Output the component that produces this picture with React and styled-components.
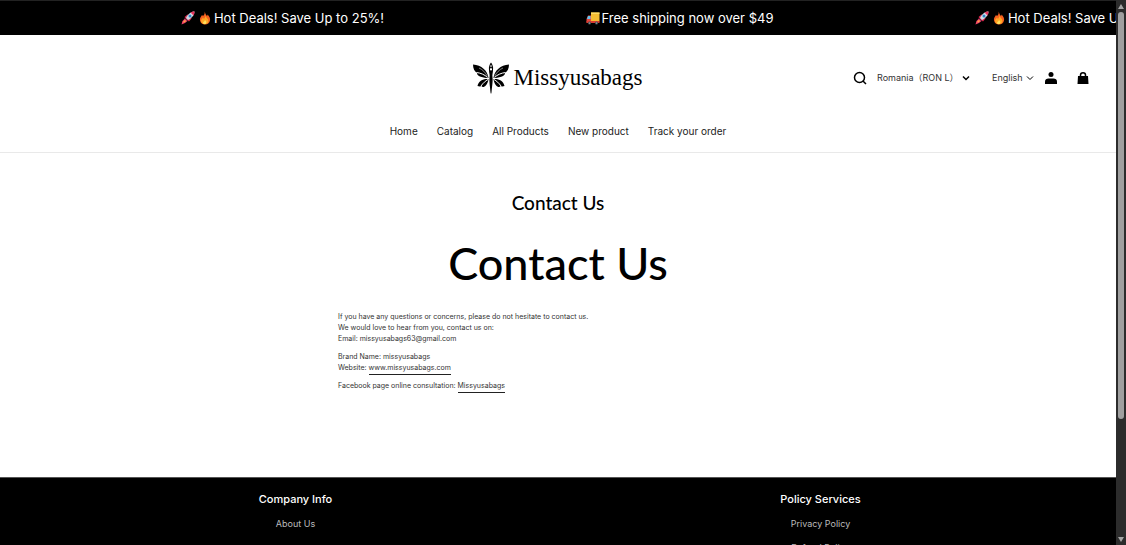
import React, { Fragment, useState } from "react";
import styled, { createGlobalStyle } from "styled-components";

const deals = [
  { id: 1, type: "hot", text: "Hot Deals! Save Up to 25%!" },
  { id: 2, type: "shipping", text: "Free shipping now over $49" },
  { id: 3, type: "hot", text: "Hot Deals! Save Up to 25%!" }
];

const navLinks = ["Home", "Catalog", "All Products", "New product", "Track your order"];

const footerMenus = [
  { title: "Company Info", links: ["About Us"] },
  { title: "Policy Services", links: ["Privacy Policy", "Refund Policy"] }
];

const Rocket = () => (
  <svg width="14" height="14" viewBox="0 0 28 28" aria-hidden="true">
    <path d="M7 12l6-5 4 2-6 8zM16 21l5-6-2-4-8 6z" fill="#d8274b" />
    <path d="M3 20l5-5 5 5-5 4-7 3z" fill="#f4416b" />
    <path d="M4 22l4-4 2 2-4 3z" fill="#ffb13b" />
    <path d="M27 1c-7 0-13 5-17 13l4 4c8-4 13-10 13-17z" fill="#cfdbe4" />
    <path d="M27 1c-3 0-6 1-8 2l6 6c1-2 2-5 2-8z" fill="#e8315b" />
    <circle cx="18" cy="10" r="3" fill="#2c86c9" />
    <path d="M8 15l5 5" stroke="#7b3153" strokeWidth="2" />
  </svg>
);

const Fire = () => (
  <svg width="14" height="14" viewBox="0 0 28 28" aria-hidden="true">
    <path d="M13 1c2 4 2 6 5 9 1-1 1-2 1-3 4 4 6 8 5 12-1 5-5 8-10 8S5 24 4 19c-1-5 2-8 4-11l2 2c3-3 4-5 3-9z" fill="#f4601f" />
    <path d="M14 8c1 5 7 7 7 12 0 4-3 6-7 6s-8-2-8-6 3-5 4-7c1 1 1 2 2 3 1-2 3-4 2-8z" fill="#ffa625" />
    <path d="M14 18c2 2 4 4 2 7-1 2-5 2-6-1 0-2 3-3 4-6z" fill="#ffe05c" />
  </svg>
);

const Truck = () => (
  <svg width="14" height="14" viewBox="0 0 28 28" aria-hidden="true">
    <path d="M10 3h17v18H10z" fill="#f6bd32" />
    <path d="M10 3h17v3H10z" fill="#ffda65" />
    <path d="M4 9h6v14H1v-7z" fill="#e9473e" />
    <path d="M4 10h5v6H2z" fill="#65c4ee" />
    <path d="M1 20h26v4H1z" fill="#d93b31" />
    <circle cx="7" cy="24" r="3" fill="#49555c" />
    <circle cx="21" cy="24" r="3" fill="#49555c" />
    <circle cx="7" cy="24" r="1" fill="#c3ccd0" />
    <circle cx="21" cy="24" r="1" fill="#c3ccd0" />
  </svg>
);

const Wings = () => (
  <svg width="36" height="32" viewBox="0 0 72 64" aria-hidden="true">
    <path d="M31 32C29 17 17 6 0 5c0 8 3 14 8 17-1 5 9 10 23 10z" />
    <path d="M41 32C43 17 55 6 72 5c0 8-3 14-8 17 1 5-9 10-23 10z" />
    <path d="M31 34c-11-1-20 4-22 14 3 1 6 1 8 0 2 5 12 1 14-14zM41 34c11-1 20 4 22 14-3 1-6 1-8 0-2 5-12 1-14-14z" />
    <path d="M7 21c8 1 16 4 22 10M65 21c-8 1-16 4-22 10M30 35c-5 3-10 7-14 13M42 35c5 3 10 7 14 13" fill="none" stroke="#fff" strokeWidth="2" />
    <path d="M12 12c7 3 13 9 17 17M60 12c-7 3-13 9-17 17" fill="none" stroke="#fff" />
    <path d="M36 1c-3 4-5 9-4 15 0 6 2 9 1 15-1 7 1 19 2 30l1 3 1-3c1-11 3-23 2-30-1-6 1-9 1-15 1-6-1-11-4-15z" />
    <path d="M36 5c-2 3-2 7-2 10l1 2h2l1-2c0-3 0-7-2-10z" fill="#fff" />
    <circle cx="36" cy="11" r="2" />
  </svg>
);

const SearchIcon = () => (
  <svg width="14" height="14" viewBox="0 0 28 28" fill="none" stroke="#000" strokeWidth="3" aria-hidden="true">
    <circle cx="13" cy="13" r="10" />
    <path d="M20 20l6 6" />
  </svg>
);

const PersonIcon = () => (
  <svg width="14" height="14" viewBox="0 0 28 28" aria-hidden="true">
    <circle cx="14" cy="7" r="5" />
    <path d="M2 26v-5c0-4 3-6 7-6h10c4 0 7 2 7 6v5z" />
  </svg>
);

const BagIcon = () => (
  <svg width="14" height="14" viewBox="0 0 28 28" aria-hidden="true">
    <path d="M4 10h20l1 16H3z" />
    <path d="M9 12V8c0-6 10-6 10 0v4" fill="none" stroke="#000" strokeWidth="3" />
  </svg>
);

const Chevron = ({ weight }) => (
  <svg width="8" height="8" viewBox="0 0 16 16" fill="none" stroke="#000" strokeWidth={weight} aria-hidden="true">
    <path d="M2 5l6 6 6-6" />
  </svg>
);

const App = () => {
  const [country, setCountry] = useState("ro");
  const [language, setLanguage] = useState("en");

  return (
    <Fragment>
      <GlobalStyle />
      <Shell>
        <Page>
          <Announcement>
            {deals.map(deal => (
              <Deal key={deal.id}>
                {deal.type === "hot" ? (
                  <HotIcons>
                    <Rocket />
                    <Fire />
                  </HotIcons>
                ) : (
                  <Truck />
                )}
                <span>{deal.text}</span>
              </Deal>
            ))}
          </Announcement>
          <Header>
            <HeaderTop>
              <Brand href="#home">
                <Wings />
                Missyusabags
              </Brand>
              <Tools>
                <IconButton aria-label="Search">
                  <SearchIcon />
                </IconButton>
                <Picker $width={93} $right={22}>
                  <select aria-label="Country" value={country} onChange={e => setCountry(e.target.value)}>
                    <option value="ro">Romania（RON L）</option>
                    <option value="us">United States（USD $）</option>
                  </select>
                  <Chevron weight="3" />
                </Picker>
                <Picker $width={42} $right={20}>
                  <select aria-label="Language" value={language} onChange={e => setLanguage(e.target.value)}>
                    <option value="en">English</option>
                    <option value="fr">French</option>
                  </select>
                  <Chevron weight="2" />
                </Picker>
                <IconButton aria-label="Account">
                  <PersonIcon />
                </IconButton>
                <IconButton aria-label="Cart" $left={18}>
                  <BagIcon />
                </IconButton>
              </Tools>
            </HeaderTop>
            <Nav>
              {navLinks.map(link => (
                <a href="#shop" key={link}>{link}</a>
              ))}
            </Nav>
          </Header>
          <Main>
            <Title>Contact Us</Title>
            <BigTitle>Contact Us</BigTitle>
            <Details>
              <p>
                If you have any questions or concerns, please do not hesitate to contact us.
                <br />
                We would love to hear from you, contact us on:
                <br />
                Email: missyusabags63@gmail.com
              </p>
              <p>
                Brand Name: missyusabags
                <br />
                Website: <TextLink href="#website">www.missyusabags.com</TextLink>
              </p>
              <p>
                Facebook page online consultation: <TextLink href="#facebook">Missyusabags</TextLink>
              </p>
            </Details>
          </Main>
          <Footer>
            {footerMenus.map(menu => (
              <FooterMenu key={menu.title}>
                <h2>{menu.title}</h2>
                {menu.links.map(link => (
                  <a href="#info" key={link}>{link}</a>
                ))}
              </FooterMenu>
            ))}
          </Footer>
        </Page>
        <ScrollRail aria-hidden="true">
          <svg width="6" height="5" viewBox="0 0 6 5"><path d="M3 0l3 5H0z" fill="#a5a5a5" /></svg>
          <ScrollTrack>
            <ScrollThumb />
          </ScrollTrack>
          <svg width="6" height="5" viewBox="0 0 6 5"><path d="M0 0h6L3 5z" fill="#a5a5a5" /></svg>
        </ScrollRail>
      </Shell>
    </Fragment>
  );
};

const GlobalStyle = createGlobalStyle`
  * {
    box-sizing: border-box;
  }
  body {
    margin: 0;
    background: #fff;
    color: #000;
    font-family: Inter, "Noto Sans CJK SC", sans-serif;
  }
  svg {
    display: block;
    flex-shrink: 0;
  }
`;

const Shell = styled.div`
  display: flex;
  height: 100vh;
  overflow: hidden;
`;

const Page = styled.div`
  flex: 1;
  min-width: 0;
  overflow: hidden;
`;

const Announcement = styled.div`
  display: flex;
  height: 35px;
  padding-left: 84px;
  padding-bottom: 1px;
  overflow: hidden;
  background: #000;
  border-top: 1px solid #222;
  color: #fff;
  font-size: 13px;
`;

const Deal = styled.div`
  display: flex;
  flex: 0 0 397px;
  align-items: center;
  justify-content: center;
  gap: 2px;
  white-space: nowrap;
`;

const HotIcons = styled.span`
  display: flex;
  gap: 3px;
`;

const Header = styled.header`
  padding: 24px 26px 13px;
  border-bottom: 1px solid #e9e9e9;
`;

const HeaderTop = styled.div`
  display: grid;
  grid-template-columns: 1fr auto 1fr;
  align-items: center;
  height: 38px;
`;

const Brand = styled.a`
  display: flex;
  grid-column: 2;
  align-items: center;
  gap: 4px;
  color: #000;
  font-family: "Liberation Serif", serif;
  font-size: 23px;
  text-decoration: none;
`;

const Tools = styled.div`
  display: flex;
  align-items: center;
  justify-content: flex-end;
`;

const IconButton = styled.button`
  margin-left: ${props => props.$left || 0}px;
  padding: 0;
  border: 0;
  background: none;
  cursor: pointer;
`;

const Picker = styled.label`
  display: flex;
  align-items: center;
  margin-left: 10px;
  margin-right: ${props => props.$right - 10}px;

  select {
    width: ${props => props.$width - 8}px;
    padding: 0;
    border: 0;
    appearance: none;
    background: none;
    color: #333;
    font-family: inherit;
    font-size: 9px;
    line-height: 16px;
  }
`;

const Nav = styled.nav`
  display: flex;
  justify-content: center;
  gap: 19px;
  padding-top: 26px;

  a {
    color: #222;
    font-size: 10px;
    line-height: 16px;
    text-decoration: none;
  }
`;

const Main = styled.main`
  max-width: 440px;
  min-height: 324px;
  margin: 0 auto;
  padding-top: 36px;
`;

const Title = styled.h1`
  margin: 0;
  font-family: Lato, sans-serif;
  font-size: 19px;
  font-weight: 500;
  line-height: 28px;
  text-align: center;
`;

const BigTitle = styled.h2`
  margin: 18px 0 0;
  font-family: Lato, sans-serif;
  font-size: 45px;
  font-weight: 500;
  line-height: 56px;
  text-align: center;
`;

const Details = styled.div`
  padding-top: 20px;
  color: #333;
  font-size: 7px;
  line-height: 11px;

  p {
    margin: 0 0 7px;
  }
`;

const TextLink = styled.a`
  padding-bottom: 2px;
  border-bottom: 1px solid #222;
  color: #333;
  text-decoration: none;
`;

const Footer = styled.footer`
  display: grid;
  grid-template-columns: 1fr 1fr;
  padding: 13px 33px 24px;
  background: #000;
  border-top: 1px solid #555;
`;

const FooterMenu = styled.div`
  display: flex;
  flex-direction: column;
  align-items: center;

  h2 {
    margin: 0 0 9px;
    color: #fff;
    font-size: 11px;
    font-weight: 500;
    line-height: 16px;
  }
  a {
    margin-bottom: 8px;
    color: #bbb;
    font-size: 9px;
    line-height: 16px;
    text-decoration: none;
  }
`;

const ScrollRail = styled.div`
  display: flex;
  flex-direction: column;
  align-items: center;
  width: 10px;
  padding: 4px 0 3px;
  background: #2c2c2c;
`;

const ScrollTrack = styled.div`
  flex: 1;
  width: 6px;
  margin: 3px 0;
`;

const ScrollThumb = styled.div`
  height: 78%;
  border-radius: 3px;
  background: #9f9f9f;
`;

export default App;
